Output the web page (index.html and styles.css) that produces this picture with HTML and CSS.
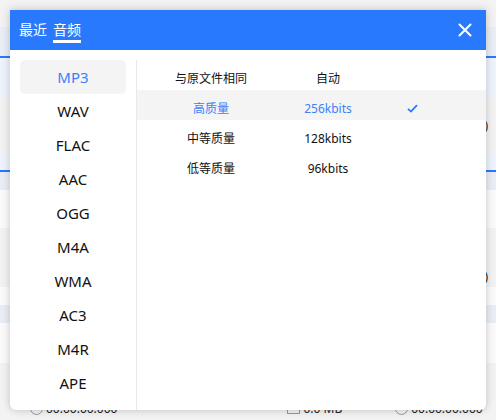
FILE: index.html
```html
<!DOCTYPE html>
<html>
<head>
<meta charset="utf-8">
<link rel="stylesheet" href="styles.css">
</head>
<body>

<!-- page behind the dialog -->
<div class="page">
  <div class="band grey h27"></div>
  <div class="band slate h29"></div>
  <div class="band blue-line"></div>
  <div class="band sky h39"></div>
  <div class="band grey h56 end-text"><span>00:03:20)</span></div>
  <div class="band sky h17"></div>
  <div class="band blue-line"></div>
  <div class="band slate h18"></div>
  <div class="band light h38"></div>
  <div class="band grey h59 end-text low"><span>00:04:10)</span></div>
  <div class="band light h18"></div>
  <div class="band slate h18"></div>
  <div class="band light h40"></div>
  <div class="band grey h57 foot">
    <span class="meta meta-a"><i class="ring"></i>00:00:00.000</span>
    <span class="meta meta-b"><i class="box"></i>0.0 MB</span>
    <span class="meta meta-c"><i class="ring"></i>00:00:00.000</span>
  </div>
</div>

<!-- format dialog -->
<div class="dialog">
  <div class="dialog-head">
    <div class="tabs">
      <span class="tab">最近</span>
      <span class="tab active">音频</span>
    </div>
    <button class="close" title="关闭">
      <svg width="14" height="14" viewBox="0 0 14 14"><path d="M1.5 1.5 L12.5 12.5 M12.5 1.5 L1.5 12.5" stroke="#fff" stroke-width="2" stroke-linecap="round"/></svg>
    </button>
  </div>
  <div class="dialog-body">
    <ul class="formats">
      <li class="selected">MP3</li>
      <li>WAV</li>
      <li>FLAC</li>
      <li>AAC</li>
      <li>OGG</li>
      <li>M4A</li>
      <li>WMA</li>
      <li>AC3</li>
      <li>M4R</li>
      <li>APE</li>
    </ul>
    <div class="quality">
      <div class="q-row">
        <span>与原文件相同</span><span>自动</span><span></span>
      </div>
      <div class="q-row current">
        <span>高质量</span><span>256kbits</span>
        <span><svg width="11" height="9" viewBox="0 0 11 9"><path d="M1 4.8 L4 7.6 L10 1.2" stroke="#2979ff" stroke-width="1.8" fill="none"/></svg></span>
      </div>
      <div class="q-row">
        <span>中等质量</span><span>128kbits</span><span></span>
      </div>
      <div class="q-row">
        <span>低等质量</span><span>96kbits</span><span></span>
      </div>
    </div>
  </div>
</div>

</body>
</html>
```

FILE: styles.css
```css
body {
  margin: 0;
  width: 496px;
  height: 420px;
  overflow: hidden;
  background: #f3f3f3;
  font-family: "Noto Sans", "Noto Sans CJK SC", sans-serif;
  position: relative;
}

/* background page */
.band { position: relative; }
.grey { background: #f3f3f3; }
.slate { background: #e9edf5; }
.sky { background: #eef3fe; }
.light { background: #fbfbfb; }
.blue-line { height: 2px; background: #2979ff; }
.h17 { height: 17px; }
.h18 { height: 18px; }
.h27 { height: 27px; }
.h29 { height: 29px; }
.h38 { height: 38px; }
.h39 { height: 39px; }
.h40 { height: 40px; }
.h56 { height: 56px; }
.h57 { height: 57px; }
.h59 { height: 59px; }

.end-text {
  display: flex;
  justify-content: flex-end;
  align-items: center;
  padding-right: 8px;
  font-size: 12px;
  color: #222;
}
.end-text.low { align-items: flex-end; padding-bottom: 2px; box-sizing: border-box; }

.foot {
  display: flex;
  align-items: flex-end;
  padding-bottom: 3px;
  box-sizing: border-box;
  font-size: 12px;
  color: #222;
}
.meta { display: flex; align-items: center; gap: 3px; }
.meta-a { margin-left: 30px; }
.meta-b { margin-left: 170px; }
.meta-c { margin-left: 53px; }
.ring {
  width: 11px; height: 11px;
  border: 1px solid #999;
  border-radius: 50%;
}
.box {
  width: 11px; height: 9px;
  border: 1px solid #999;
}

/* dialog */
.dialog {
  position: absolute;
  left: 10px;
  top: 10px;
  width: 476px;
  height: 400px;
  background: #fff;
  border-radius: 0 0 6px 6px;
  box-shadow: 0 0 8px rgba(0, 0, 0, 0.22);
  display: flex;
  flex-direction: column;
  overflow: hidden;
}
.dialog-head {
  height: 40px;
  background: #2979ff;
  display: flex;
  align-items: center;
  justify-content: space-between;
  padding: 0 14px 0 9px;
}
.tabs { display: flex; gap: 6px; }
.tab {
  color: #fff;
  font-size: 14px;
  line-height: 20px;
  padding-top: 1px;
  border-bottom: 3px solid transparent;
  margin-top: 1px;
}
.tab.active { border-bottom-color: #fff; }
.close {
  background: none;
  border: 0;
  padding: 0;
  width: 14px;
  height: 14px;
  cursor: pointer;
  display: flex;
}

.dialog-body {
  flex: 1;
  display: flex;
  padding-top: 10px;
}
.formats {
  list-style: none;
  margin: 0;
  padding: 0 10px;
  width: 106px;
  border-right: 1px solid #e8e8e8;
}
.formats li {
  height: 34px;
  line-height: 34px;
  text-align: center;
  font-size: 15px;
  color: #111;
  border-radius: 5px;
}
.formats li.selected {
  background: #f4f4f4;
  color: #3b82f6;
}

.quality { flex: 1; }
.q-row {
  display: grid;
  grid-template-columns: 148px 86px 82px;
  height: 30px;
  box-sizing: border-box;
  padding-top: 6px;
  align-items: center;
  font-size: 12px;
  color: #111;
}
.q-row span {
  text-align: center;
  display: flex;
  justify-content: center;
}
.q-row.current {
  background: #f4f4f4;
  color: #3b82f6;
}
```
